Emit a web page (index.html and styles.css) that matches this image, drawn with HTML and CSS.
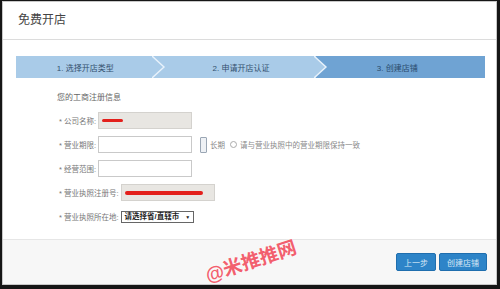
FILE: index.html
```html
<!DOCTYPE html>
<html lang="zh-CN">
<head>
  <meta charset="UTF-8" />
  <title>免费开店</title>
  <link rel="stylesheet" href="styles.css">
</head>
<body>
  <div class="dialog">
    <div class="dialog-head">免费开店</div>

    <div class="dialog-body">
      <div class="steps">
        <div class="step step-one">
          <span>1. 选择开店类型</span>
          <svg class="chevron" width="14" height="22" viewBox="0 0 14 22"><path d="M0 0 L12 11 L0 22 Z" fill="#a9cbe8"/><path d="M0 0 L12 11 L0 22" fill="none" stroke="#e8f2fb" stroke-width="1.4"/></svg>
        </div>
        <div class="step step-two">
          <span>2. 申请开店认证</span>
          <svg class="chevron" width="14" height="22" viewBox="0 0 14 22"><path d="M0 0 L12 11 L0 22 Z" fill="#a9cbe8"/><path d="M0 0 L12 11 L0 22" fill="none" stroke="#e8f2fb" stroke-width="1.4"/></svg>
        </div>
        <div class="step step-three current">
          <span>3. 创建店铺</span>
        </div>
      </div>

      <div class="form">
        <p class="form-title">您的工商注册信息</p>

        <div class="row">
          <label>* 公司名称:</label>
          <div class="field readonly"><span class="redact short"></span></div>
        </div>

        <div class="row">
          <label>* 营业期限:</label>
          <div class="field"></div>
          <span class="check"></span>
          <span class="hint">长期</span>
          <span class="radio"></span>
          <span class="hint">请与营业执照中的营业期限保持一致</span>
        </div>

        <div class="row">
          <label>* 经营范围:</label>
          <div class="field"></div>
        </div>

        <div class="row">
          <label>* 营业执照注册号:</label>
          <div class="field readonly"><span class="redact long"></span></div>
        </div>

        <div class="row">
          <label>* 营业执照所在地:</label>
          <div class="select">请选择省/直辖市 <span class="caret">▼</span></div>
        </div>
      </div>
    </div>

    <div class="dialog-foot">
      <span class="watermark">@米推推网</span>
      <button class="btn">上一步</button>
      <button class="btn">创建店铺</button>
    </div>
  </div>
</body>
</html>
```

FILE: styles.css
```css
html, body {
  margin: 0;
  height: 100%;
}
body {
  background: #161616;
  padding: 1px 3px 4px 2px;
  box-sizing: border-box;
  font-family: "Liberation Sans", "Noto Sans CJK SC", sans-serif;
  color: #555;
}
.dialog {
  position: relative;
  height: 100%;
  background: #fff;
  border: 1px solid #c8c8c8;
  box-sizing: border-box;
  display: flex;
  flex-direction: column;
}
.dialog-head {
  height: 37px;
  line-height: 37px;
  padding-left: 15px;
  font-size: 12px;
  color: #444;
  border-bottom: 1px solid #dcdcdc;
}
.dialog-body {
  flex: 1;
  padding: 16px 11px 0 13px;
}
.steps {
  display: flex;
  height: 22px;
}
.step {
  position: relative;
  display: flex;
  align-items: center;
  justify-content: center;
  background: #a9cbe8;
  font-size: 8px;
  color: #33506e;
}
.step-one { flex: 144 1 0; }
.step-two { flex: 155 1 0; padding-left: 12px; }
.step-three { flex: 170 1 0; padding-right: 6px; }
.step.current {
  background: #6fa3d3;
  color: #2a4a6c;
}
.chevron {
  position: absolute;
  right: -12px;
  top: 0;
  z-index: 1;
}
.form {
  padding-left: 41px;
}
.form-title {
  margin: 15px 0 9px;
  font-size: 8px;
  line-height: 10px;
  color: #666;
}
.row {
  display: flex;
  align-items: center;
  height: 17px;
  margin-bottom: 7px;
  font-size: 7.5px;
}
.row label {
  padding-left: 2px;
  margin-right: 2px;
  color: #777;
}
.field {
  width: 92px;
  height: 15px;
  border: 1px solid #c9c9c9;
  background: #fff;
  display: flex;
  align-items: center;
}
.field.readonly {
  background: #e8e6e2;
  border-color: #d4d2ce;
}
.redact {
  display: block;
  height: 3px;
  margin-left: 3px;
  border-radius: 2px;
  background: #e3201c;
}
.redact.short { width: 21px; }
.redact.long { width: 78px; height: 4px; }
.check {
  width: 5px;
  height: 14px;
  margin-left: 8px;
  border: 1px solid #9aa6b4;
  border-radius: 1px;
  background: #eef1f5;
}
.hint {
  color: #888;
  margin-left: 3px;
}
.radio {
  width: 5px;
  height: 5px;
  margin-left: 5px;
  border: 1px solid #aaa;
  border-radius: 50%;
}
.select {
  height: 10px;
  line-height: 10px;
  padding: 0 3px;
  border: 1px solid #666;
  font-size: 7.5px;
  font-weight: bold;
  color: #222;
}
.caret {
  font-size: 5px;
  margin-left: 4px;
}
.dialog-foot {
  position: relative;
  height: 44px;
  background: #f7f7f7;
  border-top: 1px solid #e6e6e6;
  display: flex;
  justify-content: flex-end;
  align-items: center;
  gap: 3px;
  padding-right: 9px;
}
.btn {
  height: 18px;
  padding: 0 7px;
  border: 1px solid #1f6eae;
  border-radius: 2px;
  background: #2d84c8;
  color: #d7e8f6;
  font-family: inherit;
  font-size: 8px;
}
.watermark {
  position: absolute;
  left: 200px;
  top: 6px;
  transform: rotate(-18deg);
  font-size: 19px;
  font-weight: bold;
  color: #f2606e;
  text-shadow: 0 0 2px #fff;
}
```
